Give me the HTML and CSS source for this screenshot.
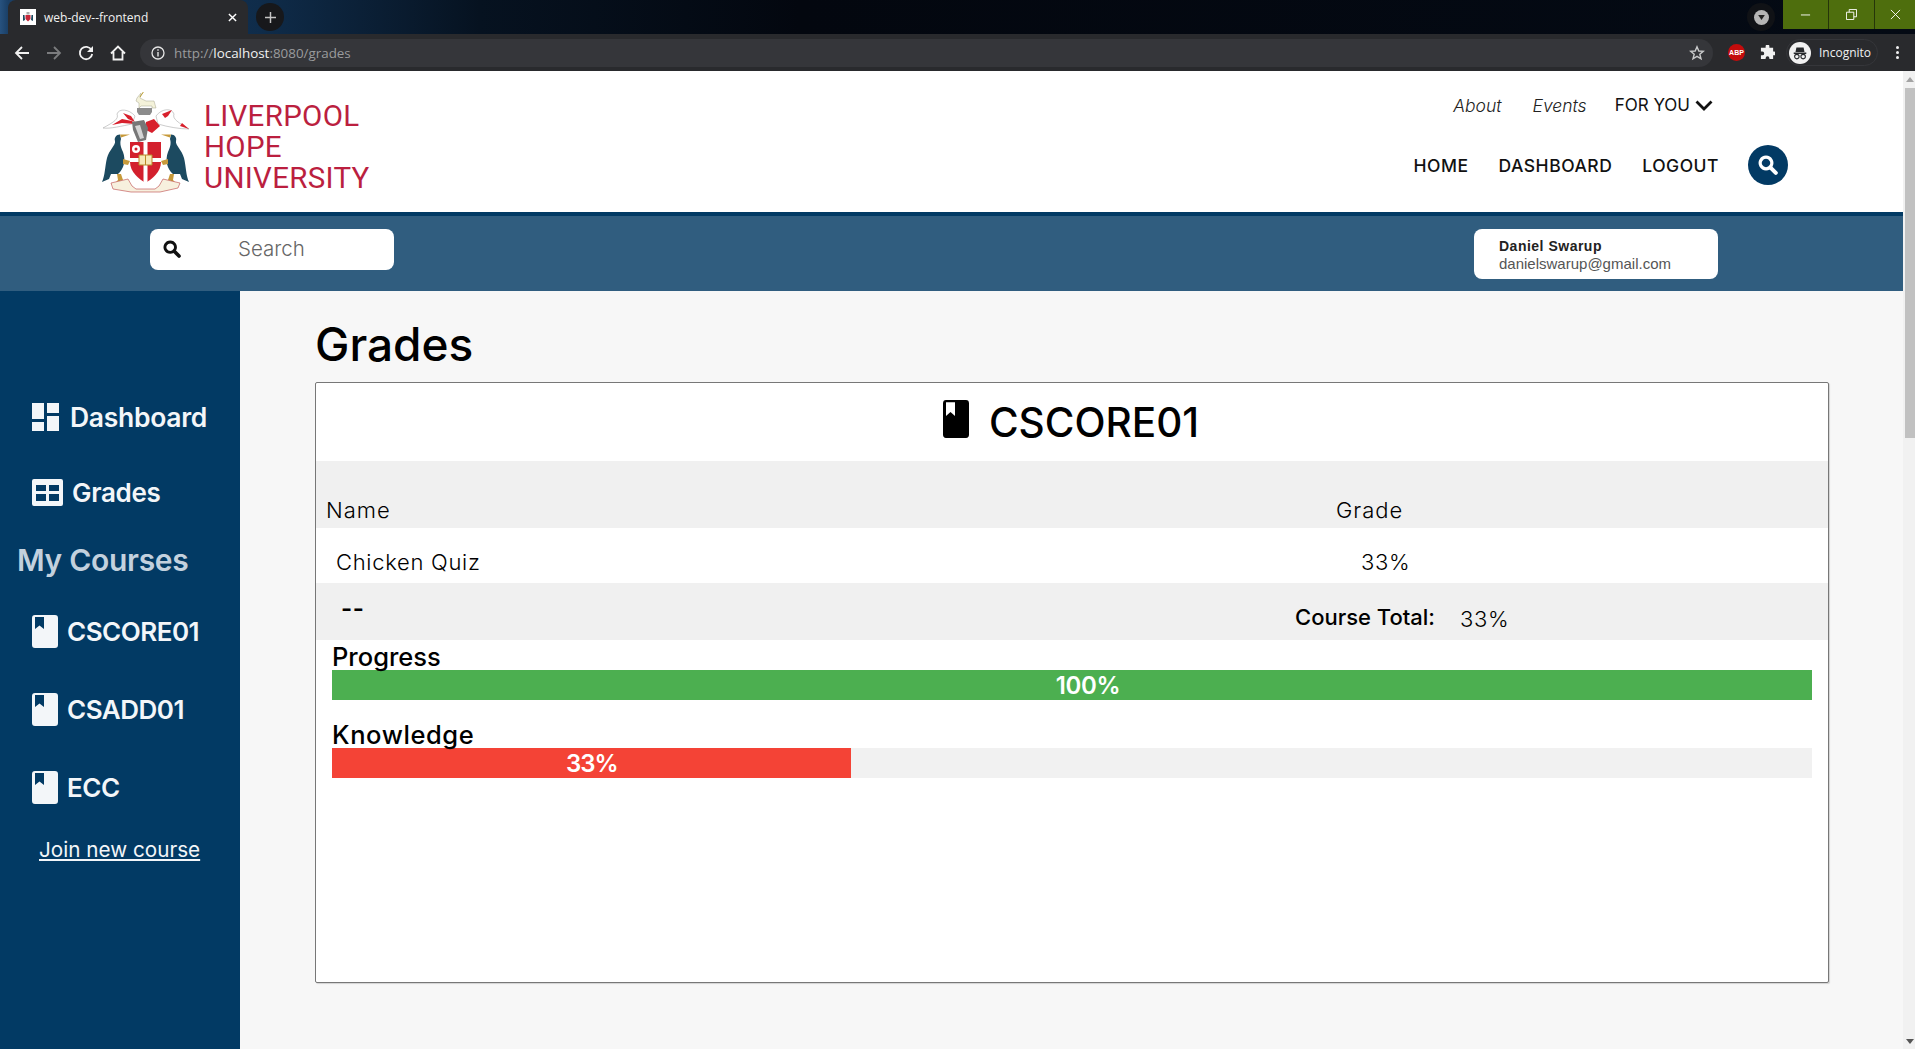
FILE: index.html
```html
<!DOCTYPE html>
<html lang="en">
<head>
<meta charset="utf-8">
<title>web-dev--frontend</title>
<link rel="stylesheet" href="styles.css">
</head>
<body>
<svg class="defs" width="0" height="0" aria-hidden="true">
  <symbol id="book" viewBox="0 0 26 33" preserveAspectRatio="none"><path fill="currentColor" fill-rule="evenodd" d="M3 0H23a3 3 0 0 1 3 3V30a3 3 0 0 1-3 3H3a3 3 0 0 1-3-3V3A3 3 0 0 1 3 0ZM3 2V14L7.500 10.500 12 14V2Z"/></symbol>
  <symbol id="mag" viewBox="0 0 20 20"><path fill="none" stroke="currentColor" stroke-width="3.200" d="M8 2.200a5.800 5.800 0 1 0 .01 0Z"/><path fill="none" stroke="currentColor" stroke-width="4" stroke-linecap="round" d="M12.800 12.800 17.800 17.800"/></symbol>
  <symbol id="crest" viewBox="0 0 88 102">
    <g id="bird-l"><path fill="#1c4a60" d="M18 42.500C14 42.500 12 46 13 49 14 53 7 58 5 66 3 74 3 84 0 90L7 87 9 82 16 82C22 77 24 68 21 60 18 54 18 50 19 47Z"/><path fill="#c79a3a" d="M18 42.500H28L19 45.500ZM15 82 19 82 21 88 14 90 16 88ZM21 67 28 69 26 73 21 72Z"/></g>
    <use href="#bird-l" transform="translate(87 0) scale(-1 1)"/>
    <path fill="#fff" stroke="#aaa" stroke-width=".6" d="M33 24C27 17 17 16 15 22 17 27 12 30 1 36 8 37 20 34 30 32ZM54 24C60 16 70 16 72 22 70 27 77 31 87 37 78 37 66 35 56 32Z"/>
    <path fill="#d8202c" d="M10 33 20 27 30 29 33 32 20 31ZM60 22 70 18 66 24 63 26ZM21 21 29 24 33 30 26 27ZM80 31 87 37 78 34ZM44 30 52 27 58 34 50 41 44 38Z"/>
    <path fill="#8c8c8c" d="M35 16H50V20L48 23H37L35 20Z"/>
    <path fill="#777" d="M30 30 42 28 46 36 44 48 36 50 31 38Z"/>
    <path fill="#d5d5d5" d="M33 34 38 33 42 46 38 47Z"/>
    <path fill="#f4f2da" stroke="#a7a58e" stroke-width=".5" d="M35 6 39 1 38 6 44 9H52L54 16H50V14H39L37 16 37 11 34 9Z"/>
    <path stroke="#b89a2c" stroke-width="1" d="M38 5 42 -1"/>
    <path fill="#d3202d" d="M28 50H59V70C59 80 50 87 43.500 91 37 87 28 80 28 70Z"/>
    <path fill="#fff" d="M41.500 50H45.500V66H59V70H45.500V91H41.500V70H28V66H41.500Z"/>
    <circle cx="34" cy="57" r="4" fill="#fff"/>
    <circle cx="34" cy="57" r="1.500" fill="#d3202d"/>
    <path fill="#f6e9b8" stroke="#b88a2a" stroke-width="1" d="M37 63H50V73H37Z"/>
    <path stroke="#b88a2a" stroke-width="1" d="M43.500 63V73"/>
    <path fill="#f7f0de" stroke="#b44" stroke-width=".6" d="M9 91 26 87 30 94 34 97H53L57 94 61 87 78 91 76 96 58 100H29L11 97Z"/>
  </symbol>
</svg>
<div class="window">
  <div class="tabstrip">
    <div class="tab">
      <svg class="favicon" viewBox="0 0 16 16"><rect width="16" height="16" fill="#fff"/><path fill="#c8273a" d="M5.500 6H10.500V10L8 12.500 5.500 10Z"/><path fill="#1c4a60" d="M3 6H4.500L5 11 3 12ZM13 6H11.500L11 11 13 12Z"/><path fill="#aaa" d="M6.500 3H9.500V5.500H6.500Z"/></svg>
      <span class="tab-title">web-dev--frontend</span>
      <svg class="tab-close" viewBox="0 0 10 10"><path stroke="#fff" stroke-width="1.600" d="M1 1 9 9M9 1 1 9"/></svg>
    </div>
    <div class="newtab"><svg viewBox="0 0 12 12"><path stroke="#c4c4c4" stroke-width="1.600" d="M6 0V12M0 6H12"/></svg></div>
    <div class="strip-spacer"></div>
    <div class="tabsearch"><span class="tabsearch-dot"><svg viewBox="0 0 8 6"><path fill="#222" d="M0 0H8L4 6Z"/></svg></span></div>
    <div class="winctl">
      <div class="winbtn"><svg viewBox="0 0 12 12"><path stroke="#fff" d="M1 6.500H11"/></svg></div>
      <div class="winbtn"><svg viewBox="0 0 12 12"><path fill="none" stroke="#fff" d="M.5 3.500H8.500V11.500H.5ZM3.500 3.500V.5H11.500V8.500H8.500"/></svg></div>
      <div class="winbtn"><svg viewBox="0 0 12 12"><path stroke="#fff" d="M1 1 11 11M11 1 1 11"/></svg></div>
    </div>
  </div>
  <div class="toolbar">
    <svg class="tool" viewBox="0 0 16 16"><path fill="none" stroke="#f1f1f1" stroke-width="1.800" d="M15 8H2M8 2 2 8 8 14"/></svg>
    <svg class="tool" viewBox="0 0 16 16"><path fill="none" stroke="#7b7c7e" stroke-width="1.800" d="M1 8H14M8 2 14 8 8 14"/></svg>
    <svg class="tool" viewBox="0 0 16 16"><path fill="none" stroke="#f1f1f1" stroke-width="1.800" d="M13.500 5A6.200 6.200 0 1 0 14.200 9"/><path fill="#f1f1f1" d="M15 1V7H9Z"/></svg>
    <svg class="tool" viewBox="0 0 16 16"><path fill="none" stroke="#f1f1f1" stroke-width="1.800" d="M1 8.500 8 1.500 15 8.500M3.500 7V14.500H12.500V7"/></svg>
    <div class="omnibox">
      <svg class="info" viewBox="0 0 14 14"><circle cx="7" cy="7" r="6" fill="none" stroke="#e6e6e6" stroke-width="1.300"/><path fill="#e6e6e6" d="M6.300 6H7.700V10.500H6.300ZM6.300 3.300H7.700V4.700H6.300Z"/></svg>
      <span class="url">http://<b>localhost</b>:8080/grades</span>
      <svg class="star" viewBox="0 0 16 16"><path fill="none" stroke="#c9cacb" stroke-width="1.400" d="M8 1.800 9.800 6 14.300 6.300 10.800 9.300 12 13.800 8 11.400 4 13.800 5.200 9.300 1.700 6.300 6.200 6Z"/></svg>
    </div>
    <div class="abp">ABP</div>
    <svg class="puzzle" viewBox="0 0 16 16"><path fill="#f1f1f1" d="M6 1.500a2 2 0 0 1 4 0V3H14V7H15a2 2 0 0 1 0 4H14V15H10V14a2 2 0 0 0-4 0V15H1V11H2.500a2 2 0 0 0 0-4H1V3H6Z"/></svg>
    <div class="incog">
      <span class="incog-badge"><svg viewBox="0 0 20 20"><path fill="#26282b" d="M6 4H14L15 9H5ZM3 9.500H17V11H3Z"/><circle cx="6.500" cy="14" r="2.500" fill="none" stroke="#26282b" stroke-width="1.200"/><circle cx="13.500" cy="14" r="2.500" fill="none" stroke="#26282b" stroke-width="1.200"/></svg></span>
      <span class="incog-label">Incognito</span>
    </div>
    <div class="kebab"><i></i><i></i><i></i></div>
  </div>
  <div class="viewport">
    <div class="page">
      <header class="masthead">
        <a class="logo">
          <svg class="crest"><use href="#crest"/></svg>
          <span class="wordmark">LIVERPOOL<br>HOPE<br>UNIVERSITY</span>
        </a>
        <nav class="mainnav">
          <div class="nav-top">
            <a class="nav-em nav-about">About</a>
            <a class="nav-em">Events</a>
            <a class="nav-for">FOR YOU<svg class="chev" viewBox="0 0 18 11"><path fill="none" stroke="#111" stroke-width="2.800" d="M1.500 1.500 9 9 16.500 1.500"/></svg></a>
          </div>
          <div class="nav-bottom">
            <a class="nav-link">HOME</a>
            <a class="nav-link">DASHBOARD</a>
            <a class="nav-link nav-last">LOGOUT</a>
            <span class="nav-search"><svg class="mag-w"><use href="#mag"/></svg></span>
          </div>
        </nav>
      </header>
      <div class="subbar">
        <div class="searchbox"><svg class="mag-k"><use href="#mag"/></svg><span class="search-ph">Search</span></div>
        <div class="userbox"><strong>Daniel Swarup</strong><span>danielswarup@gmail.com</span></div>
      </div>
      <div class="workspace">
        <aside class="sidebar">
          <a class="side-item side-dash">
            <svg class="ico-dash" viewBox="0 0 27 28"><path fill="currentColor" d="M0 0H12V16H0ZM15 0H27V10H15ZM0 19H12V28H0ZM15 13H27V28H15Z"/></svg>Dashboard
          </a>
          <a class="side-item side-grades">
            <svg class="ico-table" viewBox="0 0 31 27"><path fill="currentColor" fill-rule="evenodd" d="M2 0H29a2 2 0 0 1 2 2V25a2 2 0 0 1-2 2H2a2 2 0 0 1-2-2V2A2 2 0 0 1 2 0ZM4 6V12H14V6ZM17 6V12H27V6ZM4 15V22H14V15ZM17 15V22H27V15Z"/></svg>Grades
          </a>
          <div class="side-head">My Courses</div>
          <a class="side-item side-course"><svg class="ico-book"><use href="#book"/></svg>CSCORE01</a>
          <a class="side-item side-course"><svg class="ico-book"><use href="#book"/></svg>CSADD01</a>
          <a class="side-item side-course"><svg class="ico-book"><use href="#book"/></svg>ECC</a>
          <a class="side-join">Join new course</a>
        </aside>
        <main class="content">
          <h1 class="page-title">Grades</h1>
          <section class="card">
            <h2 class="card-title"><svg class="ico-book-lg"><use href="#book"/></svg>CSCORE01</h2>
            <div class="row row-head"><span class="cell-a">Name</span><span>Grade</span></div>
            <div class="row row-item"><span class="cell-a">Chicken Quiz</span><span>33%</span></div>
            <div class="row row-total"><span class="cell-a dash">--</span><span class="total-label">Course Total:</span><span class="total-val">33%</span></div>
            <div class="meters">
              <div class="meter-label">Progress</div>
              <div class="track"><div class="fill fill-green" style="width:100%">100%</div></div>
              <div class="meter-label meter-second">Knowledge</div>
              <div class="track"><div class="fill fill-red" style="width:35.1%">33%</div></div>
            </div>
          </section>
        </main>
      </div>
    </div>
    <div class="scrollbar">
      <svg class="sb-up" viewBox="0 0 8 5"><path fill="#a3a3a3" d="M0 5H8L4 0Z"/></svg>
      <div class="sb-thumb"></div>
      <div class="sb-rest"></div>
      <svg class="sb-down" viewBox="0 0 8 5"><path fill="#555" d="M0 0H8L4 5Z"/></svg>
    </div>
  </div>
</div>
</body>
</html>
```
FILE: styles.css
```css
* { box-sizing: border-box; }
html, body { margin: 0; padding: 0; height: 100%; overflow: hidden; }
body { font-family: "Inter", "Liberation Sans", sans-serif; color: #000; }
svg { display: block; flex: none; }
.defs { position: absolute; }
a { color: inherit; text-decoration: none; }

.window { display: flex; flex-direction: column; width: 1915px; height: 1049px; }

/* browser frame */
.tabstrip { display: flex; align-items: flex-start; height: 34px; padding-left: 8px; background: linear-gradient(90deg, #27527f 0, #1a3f66 8px, #0f2c4a 260px, #061220 480px, #03070f 800px, #040a14 100%); }
.tab { display: flex; align-items: center; width: 240px; height: 34px; padding: 0 11px 0 12px; background: #292a2d; border-radius: 8px 8px 0 0; }
.favicon { width: 16px; height: 16px; }
.tab-title { flex: 1; margin-left: 8px; font: 12px "Open Sans", sans-serif; color: #f1f1f1; }
.tab-close { width: 9px; height: 9px; }
.newtab { display: flex; align-items: center; justify-content: center; width: 28px; height: 28px; margin: 3px 0 0 8px; border-radius: 50%; background: #17181b; }
.newtab svg { width: 11px; height: 11px; }
.strip-spacer { flex: 1; }
.tabsearch { display: flex; align-items: center; justify-content: center; width: 28px; height: 28px; margin: 3px 8px 0 0; border-radius: 50%; background: #101216; }
.tabsearch-dot { display: flex; align-items: center; justify-content: center; width: 15px; height: 15px; border-radius: 50%; background: #b5b5b5; }
.tabsearch-dot svg { width: 7px; height: 5px; }
.winctl { display: flex; gap: 1px; height: 29px; background: #26350a; }
.winbtn { display: flex; align-items: center; justify-content: center; width: 45px; height: 29px; background: #4e6e0d; }
.winbtn:last-child { width: 40px; }
.winbtn svg { width: 11px; height: 11px; }

.toolbar { display: flex; align-items: center; height: 37px; padding: 0 0 0 14px; background: #292a2d; }
.tool { width: 16px; height: 16px; margin-right: 16px; }
.omnibox { display: flex; align-items: center; width: 1573px; height: 28px; margin-left: -2px; padding: 0 8px 0 11px; border-radius: 14px; background: #35363a; }
.info { width: 14px; height: 14px; }
.url { flex: 1; margin-left: 9px; font: 13.400px "Open Sans", sans-serif; color: #9a9b9d; }
.url b { font-weight: 400; color: #f1f1f1; }
.star { width: 16px; height: 16px; }
.abp { width: 17px; height: 17px; margin-left: 15px; border-radius: 50%; background: #c40c0c; color: #fff; font: 700 7px/17px "Liberation Sans", sans-serif; text-align: center; }
.puzzle { width: 15px; height: 15px; margin-left: 15px; }
.incog { display: flex; align-items: center; width: 92px; height: 27px; margin-left: 11px; padding-left: 2px; border: 1px solid #35363a; border-radius: 14px; }
.incog-badge { display: flex; align-items: center; justify-content: center; width: 22px; height: 22px; border-radius: 50%; background: #f1f1f1; }
.incog-badge svg { width: 18px; height: 18px; }
.incog-label { margin-left: 8px; font: 12px "Open Sans", sans-serif; color: #f1f1f1; }
.kebab { display: flex; flex-direction: column; gap: 2px; margin-left: 18px; }
.kebab i { display: block; width: 3px; height: 3px; border-radius: 50%; background: #f1f1f1; }

/* scrolling viewport */
.viewport { display: flex; flex: 1; min-height: 0; }
.page { display: flex; flex-direction: column; flex: 1; min-width: 0; background: #f7f7f7; }

.scrollbar { display: flex; flex-direction: column; width: 12px; padding-left: 2px; background: #f1f1f1; }
.sb-up { width: 8px; height: 5px; margin: 6px 0 6px 1px; }
.sb-thumb { height: 350px; background: #c1c1c1; }
.sb-rest { flex: 1; }
.sb-down { width: 8px; height: 5px; margin: 6px 0 5px 1px; }

/* masthead */
.masthead { display: flex; justify-content: space-between; height: 145px; padding: 20px 115px 0 102px; background: #fff; border-bottom: 4px solid #023a64; }
.logo { display: flex; align-items: flex-start; }
.crest { width: 88px; height: 102px; margin-top: 1px; }
.wordmark { margin: 10px 0 0 14px; font: 400 29.500px/31px "Roboto", sans-serif; letter-spacing: .3px; color: #bb1f3f; }
.mainnav { display: flex; flex-direction: column; align-items: flex-end; font-size: 17.500px; }
.nav-top { display: flex; align-items: center; height: 28px; margin: 0 75px 0 0; }
.nav-em { margin-right: 28px; font-style: italic; font-weight: 300; color: #222; }
.nav-about { margin-right: 31px; }
.nav-for { display: flex; align-items: center; font-size: 17px; font-weight: 400; color: #111; }
.chev { width: 18px; height: 11px; margin-left: 5px; }
.nav-bottom { display: flex; align-items: center; height: 40px; margin-top: 26px; }
.nav-link { margin-right: 30px; color: #111; font-weight: 500; letter-spacing: .5px; }
.nav-last { margin-right: 29px; }
.nav-search { display: flex; align-items: center; justify-content: center; width: 40px; height: 40px; border-radius: 50%; background: #023a64; }
.mag-w { width: 20px; height: 20px; color: #fff; }

/* sub bar */
.subbar { display: flex; justify-content: space-between; align-items: flex-start; height: 75px; padding: 13px 185px 0 150px; background: #305d7f; }
.searchbox { display: flex; align-items: center; width: 244px; height: 41px; padding: 0 0 2px 13px; border-radius: 8px; background: #fff; }
.mag-k { width: 18px; height: 18px; color: #111; }
.search-ph { margin-left: 57px; font-size: 20.500px; font-weight: 300; color: #666; }
.userbox { display: flex; flex-direction: column; justify-content: center; width: 244px; height: 50px; padding: 2px 0 0 25px; border-radius: 8px; background: #fff; font: 15px/17px "Liberation Sans", sans-serif; }
.userbox strong { font-size: 14px; letter-spacing: .5px; color: #222; }
.userbox span { color: #555; }

/* workspace */
.workspace { display: flex; flex: 1; min-height: 0; }
.sidebar { display: flex; flex-direction: column; width: 240px; padding-top: 96px; background: #023a64; color: #f3f6f9; }
.side-item { display: flex; align-items: center; height: 60px; padding-left: 32px; font-size: 26px; font-weight: 600; letter-spacing: -.3px; }
.side-dash { font-size: 26.500px; }
.side-grades { margin-top: 15px; }
.ico-dash { width: 27px; height: 28px; margin-right: 11px; }
.ico-table { width: 31px; height: 27px; margin-right: 9px; }
.side-head { height: 40px; margin: 18px 0 21px 17px; font-size: 30px; font-weight: 600; line-height: 40px; letter-spacing: -.3px; color: #c3d1de; }
.side-course { margin-bottom: 18px; letter-spacing: -.5px; }
.ico-book { width: 26px; height: 33px; margin-right: 9px; }
.side-join { height: 30px; margin-left: 39px; font-size: 20.700px; line-height: 30px; text-decoration: underline; }

/* content */
.content { flex: 1; min-width: 0; padding: 16px 74px 0 75px; }
.page-title { margin: 0; font-size: 46px; font-weight: 500; line-height: 75px; }
.card { height: 601px; border: 1px solid #777; border-radius: 2px; background: #fff; box-shadow: 1px 1px 1px rgba(0, 0, 0, .15); }
.card-title { display: flex; align-items: center; justify-content: center; height: 78px; margin: 0; padding-right: 2px; font-size: 40.500px; font-weight: 500; }
.ico-book-lg { width: 26px; height: 38px; margin: -7px 20px 0 0; color: #000; }

.row { display: flex; font-size: 22px; font-weight: 300; letter-spacing: .7px; }
.cell-a { flex: none; }
.row-head { align-items: flex-end; height: 67px; padding: 0 0 5px 10px; background: #f0f0f0; letter-spacing: 1px; }
.row-head .cell-a { width: 1010px; }
.row-item { align-items: center; height: 55px; padding: 12px 0 0 20px; }
.row-item .cell-a { width: 1025px; }
.row-total { align-items: flex-start; height: 57px; padding: 11px 0 0 25px; background: #f0f0f0; }
.row-total .cell-a { width: 954px; }
.dash { font-size: 24px; font-weight: 600; }
.total-label { margin-top: 10px; font-weight: 500; letter-spacing: 0; }
.total-val { margin: 12px 0 0 25px; }

.meters { padding: 0 16px; }
.meter-label { height: 30px; font-size: 25.500px; font-weight: 500; line-height: 33px; }
.meter-second { height: 48px; padding-top: 18px; letter-spacing: .6px; }
.track { height: 30px; background: #f1f1f1; }
.fill { height: 100%; color: #fff; font-size: 24px; font-weight: 600; line-height: 32px; text-align: center; letter-spacing: -.3px; }
.fill-green { padding-left: 32px; background: #4caf50; }
.fill-red { letter-spacing: -1px; background: #f44336; }
```
